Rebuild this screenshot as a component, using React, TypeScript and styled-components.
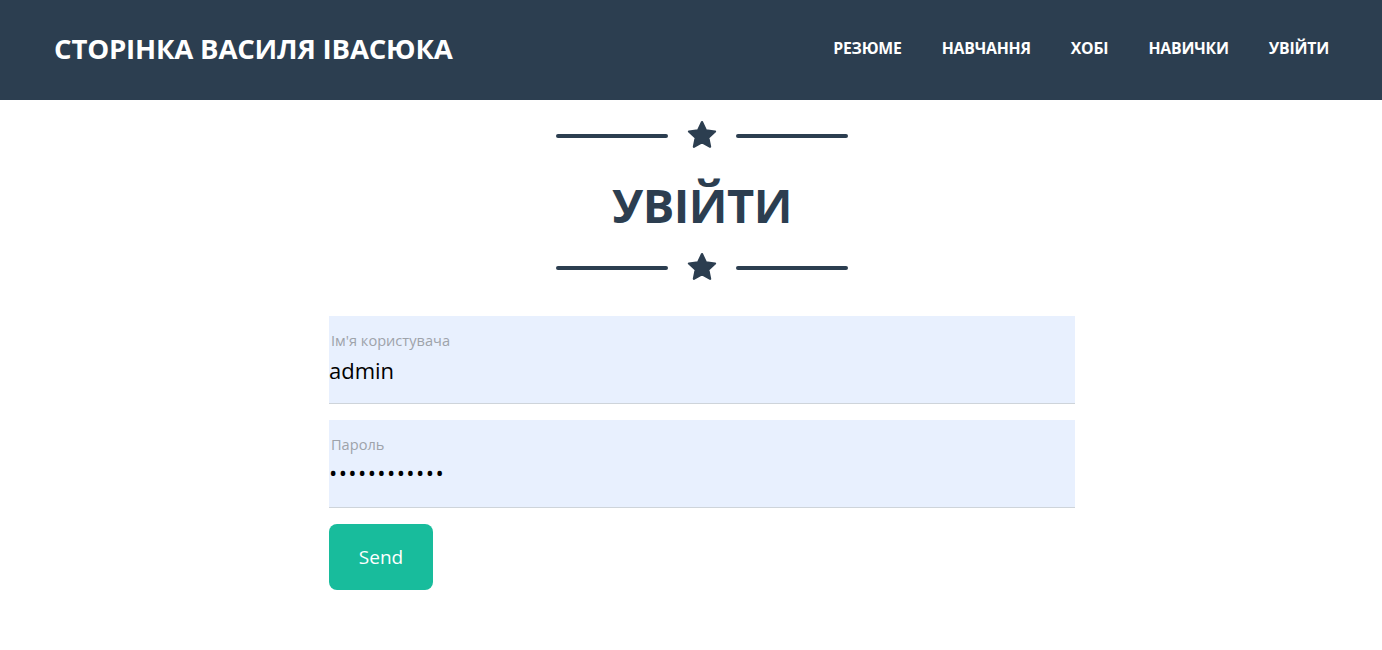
import React from "react";
import styled, { createGlobalStyle } from "styled-components";

const Global = createGlobalStyle`
  html, body { margin: 0; padding: 0; background: #fff; }
  body { font-family: "Open Sans", "Noto Sans", sans-serif; color: #212529; }
  * { box-sizing: border-box; }
`;

const Nav = styled.nav`
  height: 100px;
  background: #2c3e50;
  display: flex;
  align-items: center;
  justify-content: space-between;
  padding: 0 33px 4px 54px;
`;

const Brand = styled.a`
  color: #fff;
  font-weight: 700;
  font-size: 27.6px;
  letter-spacing: -0.2px;
  text-decoration: none;
`;

const Menu = styled.ul`
  list-style: none;
  display: flex;
  margin: 0;
  padding: 0;
`;

const MenuItem = styled.li`
  a {
    display: block;
    color: #fff;
    font-weight: 700;
    font-size: 15.8px;
    text-decoration: none;
    padding: 0 20px;
    letter-spacing: -0.2px;
  }
`;

const Main = styled.main`
  display: flex;
  flex-direction: column;
  align-items: center;
  padding: 19px 0 0 22px;
`;

const Divider = styled.div`
  display: flex;
  align-items: center;
  gap: 17px;
  height: 33px;
`;

const Line = styled.span`
  display: block;
  width: 112px;
  height: 4px;
  border-radius: 2px;
  background: #2c3e50;
`;

const Title = styled.h2`
  margin: 11px 0 4px;
  font-size: 47px;
  font-weight: 700;
  color: #2c3e50;
  line-height: 84px;
  letter-spacing: -0.5px;
`;

const Form = styled.form`
  width: 746px;
  margin-top: 32px;
  display: flex;
  flex-direction: column;
  gap: 16px;
`;

const Field = styled.div`
  background: #e8f0fe;
  border-bottom: 1px solid #ced4da;
  height: 88px;
  padding: 14px 0 0 0;
  display: flex;
  flex-direction: column;
`;

const Label = styled.label`
  font-size: 14.6px;
  color: #9ea3aa;
  padding-left: 2px;
  line-height: 20px;
`;

const Value = styled.input<{ $pw?: boolean }>`
  border: none;
  background: transparent;
  outline: none;
  padding: 0;
  font-family: "Open Sans", "Noto Sans", sans-serif;
  font-size: 22px;
  color: #000;
  line-height: 30px;
  margin-top: ${(p) => (p.$pw ? "3px" : "5px")};
  letter-spacing: ${(p) => (p.$pw ? "1.4px" : "0")};
`;

const Button = styled.button`
  width: 104px;
  height: 66px;
  border: none;
  border-radius: 8px;
  background: #18bc9c;
  color: #fff;
  font-family: "Open Sans", "Noto Sans", sans-serif;
  font-size: 19px;
  cursor: pointer;
`;

const Star = () => (
  <svg width="34" height="33" viewBox="0 0 24 24">
    <polygon
      points="12,2.2 14.9,8.3 21.5,9.1 16.6,13.6 17.9,20.2 12,16.9 6.1,20.2 7.4,13.6 2.5,9.1 9.1,8.3"
      fill="#2c3e50"
      stroke="#2c3e50"
      strokeWidth="1.6"
      strokeLinejoin="round"
    />
  </svg>
);

const Deco = () => (
  <Divider>
    <Line />
    <Star />
    <Line />
  </Divider>
);

export default function App() {
  const links = ["Резюме", "Навчання", "Хобі", "Навички", "Увійти"];
  return (
    <>
      <Global />
      <Nav>
        <Brand href="#">СТОРІНКА ВАСИЛЯ ІВАСЮКА</Brand>
        <Menu>
          {links.map((l) => (
            <MenuItem key={l}>
              <a href="#">{l.toUpperCase()}</a>
            </MenuItem>
          ))}
        </Menu>
      </Nav>
      <Main>
        <Deco />
        <Title>УВІЙТИ</Title>
        <Deco />
        <Form onSubmit={(e) => e.preventDefault()}>
          <Field>
            <Label>Ім'я користувача</Label>
            <Value defaultValue="admin" />
          </Field>
          <Field>
            <Label>Пароль</Label>
            <Value $pw type="password" defaultValue="adminadmin12" />
          </Field>
          <div>
            <Button type="submit">Send</Button>
          </div>
        </Form>
      </Main>
    </>
  );
}
